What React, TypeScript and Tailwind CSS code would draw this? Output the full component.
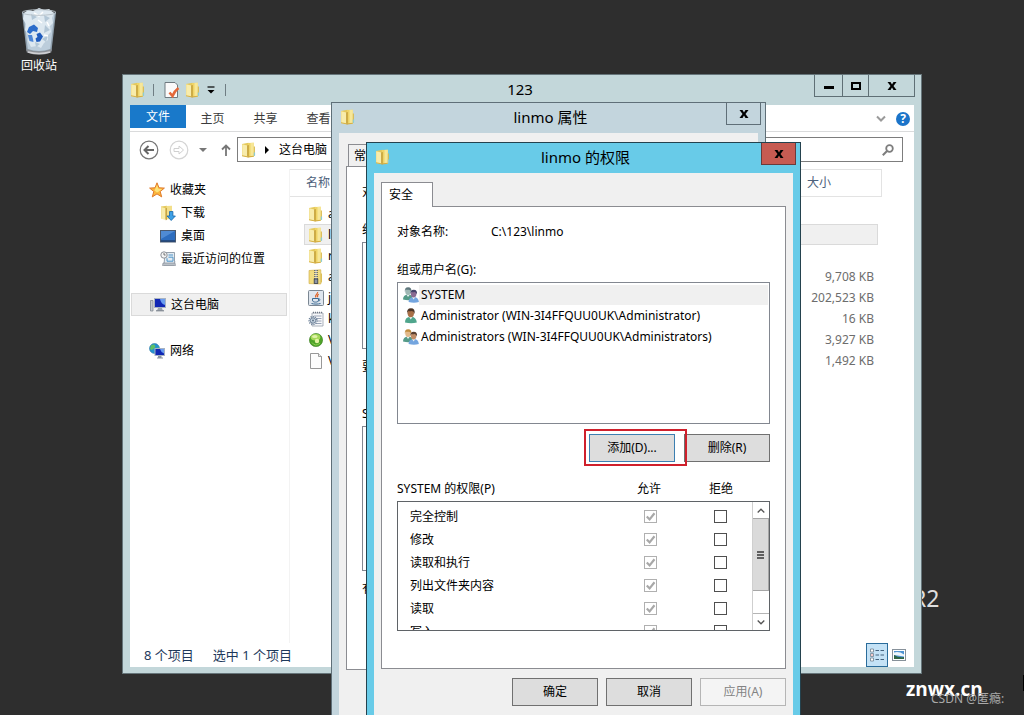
import type { ReactNode } from "react";

type IconProps = { className?: string };

function FolderIcon({ className = "size-4" }: IconProps) {
  return (
    <svg viewBox="0 0 16 16" className={`shrink-0 ${className}`} aria-hidden="true">
      <path d="M1 2 7.500.8v13.700L1 13.800z" fill="#e5c95c" />
      <path d="M7 1 12.800.8v13.700L7 15z" fill="#efd467" />
      <path d="M9.500 1 12.800.8v13.700l-3.300.2z" fill="#f7e798" />
      <path d="M1.200 2.200 6.200 3.400v11.800l-5-1.200z" fill="#f8ecab" />
      <path d="M6.200 3.400 7.800 3v12.500l-1.600-.3z" fill="#b8922f" opacity=".75" />
      <path d="M1 13.200 7.500 14.600v1L1 14.200z" fill="#d6b044" />
      <path d="M7.500 14.200 12.800 13.800v.9l-5.300.8z" fill="#d6b044" />
      <path d="M12.800 4.500h1.100v8.500l-1.100 1z" fill="#d9b94e" />
      <path d="M12.800 10.500h1.300v3l-1.300.8z" fill="#8ccbd4" />
    </svg>
  );
}

function ZipFolderIcon() {
  return (
    <svg viewBox="0 0 16 16" className="size-4 shrink-0" aria-hidden="true">
      <path d="M1 1.500 12.800.8v14.200L1 14.600z" fill="#f1dc80" stroke="#cfa93c" strokeWidth=".6" />
      <path d="M12.800 4.600h1.200v9h-1.200z" fill="#dcbf58" />
      <path d="M8 1v10" stroke="#3f485c" strokeWidth="3.400" strokeDasharray="1 1" />
      <path d="M8 1v10" stroke="#e8e8ee" strokeWidth="1" />
      <rect x="6.200" y="10" width="3.600" height="4.500" fill="#8d94a5" stroke="#353c4c" strokeWidth=".8" />
    </svg>
  );
}

function JavaIcon() {
  return (
    <svg viewBox="0 0 16 16" className="size-4 shrink-0" aria-hidden="true">
      <rect x=".5" y=".5" width="15" height="15" rx="1" fill="#dfe6ee" stroke="#7b8793" />
      <path d="M9.600 2c.6 2-3.400 2.600-1.700 5.500M10.800 4.300c-2 .8-1.500 1.900-1.100 3" fill="none" stroke="#e06226" strokeWidth="1.200" />
      <path d="M4.500 8.500h6v1.600c0 1.500-1.200 2-3 2s-3-.5-3-2zM10.500 9c2-.5 2 1.800 0 2M3.500 13.500c2.500.8 6.500.8 9 0" fill="none" stroke="#3c6a93" strokeWidth="1" />
    </svg>
  );
}

function ConfigIcon() {
  return (
    <svg viewBox="0 0 16 16" className="size-4 shrink-0" aria-hidden="true">
      <path d="M4 2h11v13H4z" fill="#f7f8fa" stroke="#97a0ab" strokeWidth=".8" />
      <path d="M5 1.500h10" stroke="#6f7885" strokeWidth="1.500" strokeDasharray="1 1" />
      <path d="M6 5h7.500M8 7.500h5.500M9 10h4.500M8 12.500h5.500" stroke="#8f9bb0" strokeWidth=".9" />
      <circle cx="5" cy="9.500" r="3.900" fill="none" stroke="#6e8299" strokeWidth="1.500" strokeDasharray="1.200 1" />
      <circle cx="5" cy="9.500" r="2.700" fill="#c9d6e3" stroke="#6e8299" strokeWidth="1" />
      <circle cx="5" cy="9.500" r=".9" fill="#55697f" />
    </svg>
  );
}

function GreenBallIcon() {
  return (
    <svg viewBox="0 0 16 16" className="size-4 shrink-0" aria-hidden="true">
      <circle cx="8" cy="8" r="6.600" fill="#4fa329" stroke="#3a7d20" strokeWidth=".6" />
      <ellipse cx="7.500" cy="5.300" rx="4.800" ry="3.300" fill="#a5d85a" />
      <ellipse cx="6.800" cy="4.500" rx="2.800" ry="1.600" fill="#dff2a8" />
      <circle cx="9" cy="9" r="2.200" fill="#e4f3a4" />
      <path d="M4 10.500q3 4.500 8 .8" fill="none" stroke="#8dd04e" strokeWidth="1" />
    </svg>
  );
}

function BlankFileIcon() {
  return (
    <svg viewBox="0 0 16 16" className="size-4 shrink-0" aria-hidden="true">
      <path d="M2.500.5h8l3 3v12h-11z" fill="#fdfdfd" stroke="#8c8c8c" strokeWidth=".9" />
      <path d="M10.500.5v3h3" fill="#ececec" stroke="#8c8c8c" strokeWidth=".8" />
    </svg>
  );
}

function StarIcon() {
  return (
    <svg viewBox="0 0 16 16" className="size-4 shrink-0" aria-hidden="true">
      <path
        d="m8 .8 2 5 5.400.3-4.200 3.400 1.500 5.400L8 11.900l-4.700 3 1.500-5.400L.6 6.100 6 5.800z"
        fill="#fbb73c"
        stroke="#e07a2c"
        strokeWidth="1"
        strokeLinejoin="round"
      />
      <path d="m8 3 1.400 3.700 3.800.3-3 2.300L8 10.500 5.500 8.500z" fill="#fde27a" />
    </svg>
  );
}

function DownloadsIcon() {
  return (
    <svg viewBox="0 0 16 16" className="size-4 shrink-0" aria-hidden="true">
      <path d="M1 1.500 7 .8v13.500l-6-.8z" fill="#e5c95c" />
      <path d="M6.500 1 12 .8v13l-5.500.7z" fill="#f3df8a" />
      <path d="M1.200 2 5.500 3.200V15l-4.300-1.300z" fill="#f8ecab" />
      <path d="M5.500 3.200 7 3v12l-1.500.2z" fill="#b8922f" opacity=".7" />
      <path d="M9.500 6.500h3.400V11h2.500l-4.200 4.500L7 11h2.500z" fill="#3da0e6" stroke="#1566a8" strokeWidth=".8" />
    </svg>
  );
}

function DesktopIcon() {
  return (
    <svg viewBox="0 0 16 16" className="size-4 shrink-0" aria-hidden="true">
      <rect x=".5" y="2.500" width="15" height="11.500" fill="#2d6dbf" stroke="#4a5a70" />
      <path d="M1 3h14L1 11z" fill="#4f8bd4" />
      <path d="M1 13h14" stroke="#20375c" strokeWidth="1.200" />
    </svg>
  );
}

function RecentIcon() {
  return (
    <svg viewBox="0 0 16 16" className="size-4 shrink-0" aria-hidden="true">
      <path d="M5 1.500h9.500v9H15l-1 3.500H4z" fill="#e3ebf2" stroke="#7e8b99" strokeWidth=".8" />
      <circle cx="4" cy="4" r="3.200" fill="#f4f4f4" stroke="#81868d" strokeWidth=".9" />
      <path d="M4 2v2h1.600" fill="none" stroke="#555" strokeWidth=".8" />
      <path d="M8.500 4H13M8.500 6.200H13v4H7v-3" fill="none" stroke="#4f95c9" strokeWidth="1" />
      <path d="M3 12h12l.5 2.500h-13z" fill="#b9c0c8" stroke="#7d858e" strokeWidth=".6" />
    </svg>
  );
}

function ComputerIcon() {
  return (
    <svg viewBox="0 0 16 16" className="size-4 shrink-0" aria-hidden="true">
      <path d="M.5 3.500h2.500v10.500H.5z" fill="#c6cbd1" stroke="#777f88" strokeWidth=".7" />
      <rect x="4.500" y="1.500" width="11" height="9" fill="#1027b4" stroke="#a7b2c2" />
      <path d="M10 2h5v6q-4-1-5-6" fill="#6a9df0" />
      <path d="M8 11h4l.8 2.500H7z" fill="#9aa4af" />
      <path d="M6 13.800h8" stroke="#6d7680" strokeWidth="1" />
    </svg>
  );
}

function NetworkIcon() {
  return (
    <svg viewBox="0 0 16 16" className="size-4 shrink-0" aria-hidden="true">
      <circle cx="5.500" cy="5.500" r="5" fill="#2692cf" stroke="#1b6c9c" strokeWidth=".5" />
      <path d="M2 2.500q3-2 4 0t-2 3.500Q2 8 1 5.500zM6.500 6l3-2 .8 3-3 3z" fill="#5fc064" />
      <rect x="6" y="5.500" width="9.500" height="7" fill="#1027b4" stroke="#a7b2c2" />
      <path d="M11 6h4v4.500q-3-1-4-4.500" fill="#6a9df0" />
      <path d="M9 13h3.500v1.500H14v1H8v-1h1z" fill="#8b95a1" />
    </svg>
  );
}

type PersonProps = { x: number; y: number; scale: number; hair: string; skin: string; shirt: string };

function PersonShape({ x, y, scale, hair, skin, shirt }: PersonProps) {
  return (
    <g transform={`translate(${x} ${y}) scale(${scale})`}>
      <path d="M0 10.500q0-4 4-4.200t4.600 4.200q-4 1.200-8.600 0" fill={shirt} />
      <path d="m2.800 6.200 1.400 2.200 1.500-2.200z" fill="#eef4f4" />
      <ellipse cx="4.200" cy="3.800" rx="2.300" ry="2.900" fill={skin} />
      <path d="M1.600 4.200Q1 .2 4.300.2t2.600 4.100Q6.300 2.300 5 2.200q-1.800.4-2.600-.1-.6.700-.8 2.100" fill={hair} />
    </g>
  );
}

function UserIcon() {
  return (
    <svg viewBox="0 0 16 16" className="size-4 shrink-0" aria-hidden="true">
      <PersonShape x={2} y={0} scale={1.38} hair="#4c3425" skin="#a86f47" shirt="#4fa58c" />
    </svg>
  );
}

function GroupIcon({ warm = false }: { warm?: boolean }) {
  return (
    <svg viewBox="0 0 16 16" className="size-4 shrink-0" aria-hidden="true">
      <PersonShape x={0} y={0} scale={1.2} hair={warm ? "#c08c3e" : "#5f777d"} skin={warm ? "#e2b98a" : "#9fb8b4"} shirt="#559b88" />
      <PersonShape x={5.6} y={2.4} scale={1.2} hair={warm ? "#5a4030" : "#46446b"} skin={warm ? "#c08d66" : "#8a6a92"} shirt="#74a5df" />
    </svg>
  );
}

function RecycleBinIcon() {
  return (
    <svg viewBox="0 0 40 48" className="h-12 w-10" aria-hidden="true">
      <path d="M3 4.500 7.500 43q12.500 5 25 0L37 4.500z" fill="#8f9fac" />
      <path d="M4.500 6 8.800 41q11.200 4 22.400 0L35.500 6z" fill="#bccddb" />
      <path d="m5 5 4-3 5 1 6-3 5 2 5-1 5 4-2 5 1 5-3 3 1 6-3 3 0 5-4 3-3 5-4-2-6 1-3-6 1-5-4-6 1-6-3-5z" fill="#dde8f0" />
      <path d="m25 7 6 3-5 4zM26 17l5 5-6 3zM23 31l6-4-2 7zM12 6l6 3-5 3zM16 34l5 2-4 3z" fill="#b2c6d6" />
      <path d="m15 5 5 3 4-4M28 14l2 4M25 27l4 1M19 12l4 3" fill="none" stroke="#fff" strokeWidth="1.500" />
      <path d="m10 19 5-2.500 4 3.500-1 4-4-1-3 3-3-2z" fill="#2b6cca" />
      <path d="m17.500 26 3.500-1.500 3 4-3 5-3.500.5-1-3.500 2-1.500z" fill="#1f5bbd" />
      <path d="m9 27 4 0 1 4 .5 3-4-1z" fill="#4d86d6" />
      <ellipse cx="20" cy="4.500" rx="17" ry="2.800" fill="none" stroke="#b9c3ca" strokeWidth="1" />
      <path d="M7.300 41q12.700 5 25.400 0l-.5 3.500q-12 4.500-24.400 0z" fill="#8c9096" />
      <path d="M9 44q11 3 22 0" fill="none" stroke="#cfd0d4" strokeWidth="1.600" />
    </svg>
  );
}

function PropertiesIcon() {
  return (
    <svg viewBox="0 0 16 16" className="size-4" aria-hidden="true">
      <path d="M1 .5h10l2.500 2.500v12.500H1z" fill="#fafafa" stroke="#6f7a80" />
      <path d="M5.500 10.500 8.500 14q2-5 6-8" fill="none" stroke="#e4683a" strokeWidth="2.600" />
    </svg>
  );
}

function CloseGlyph() {
  return (
    <svg viewBox="0 0 10 8" className="h-2 w-2.5" aria-hidden="true">
      <path d="M.5 0h3L5 2.500 6.500 0h3L6.500 4l3 4h-3L5 5.500 3.500 8h-3l3-4z" fill="#000" />
    </svg>
  );
}

function TitleBar({ title, closeClass }: { title: string; closeClass: string }) {
  return (
    <header className="grid h-[30px] grid-cols-[1fr_auto_1fr] items-center pr-1 pl-2">
      <FolderIcon className="mb-0.5 size-4" />
      <h2 className="pb-0.5 text-[15px] leading-5">{title}</h2>
      <div className="flex h-full justify-end">
        <button
          type="button"
          aria-label="关闭"
          className={`flex h-[22px] w-[35px] items-center justify-center self-start border-x border-b ${closeClass}`}
        >
          <CloseGlyph />
        </button>
      </div>
    </header>
  );
}

type DialogButtonProps = { children: ReactNode; className?: string; disabled?: boolean };

function DialogButton({ children, className = "border-[#707070] bg-[#dddddd]", disabled = false }: DialogButtonProps) {
  return (
    <button type="button" disabled={disabled} className={`h-7 w-[86px] border text-center leading-5 ${className}`}>
      {children}
    </button>
  );
}

function NavItem({ icon, label, className = "pl-[19px]" }: { icon: ReactNode; label: string; className?: string }) {
  return (
    <li>
      <a href="#" className={`flex h-[23px] items-center gap-[5px] ${className}`}>
        {icon}
        {label}
      </a>
    </li>
  );
}

const files = [
  { icon: <FolderIcon />, name: "a", size: "" },
  { icon: <FolderIcon />, name: "l", size: "", selected: true },
  { icon: <FolderIcon />, name: "r", size: "" },
  { icon: <ZipFolderIcon />, name: "a", size: "9,708 KB" },
  { icon: <JavaIcon />, name: "j", size: "202,523 KB" },
  { icon: <ConfigIcon />, name: "k", size: "16 KB" },
  { icon: <GreenBallIcon />, name: "V", size: "3,927 KB" },
  { icon: <BlankFileIcon />, name: "V", size: "1,492 KB" },
];

function FileTable() {
  return (
    <table className="w-[592px] table-fixed border-collapse self-start">
      <thead>
        <tr className="text-left text-[#4c607a]">
          <th scope="col" className="p-0 pb-1.5 font-normal">
            <div className="flex h-7 items-center border-y border-[#e3e3e3] pl-4">名称</div>
          </th>
          <th scope="col" className="w-[83px] p-0 pb-1.5 font-normal">
            <div className="flex h-7 items-center border border-l-0 border-[#e3e3e3] pl-2">大小</div>
          </th>
        </tr>
      </thead>
      <tbody>
        {files.map((file, i) => (
          <tr key={i}>
            <td className="p-0 pl-3.5">
              <div className={`flex h-[21px] items-center gap-1 border border-r-0 pl-[3px] ${file.selected ? "border-[#dadada] bg-[#f0f0f0]" : "border-transparent"}`}>
                {file.icon}
                {file.name}
              </div>
            </td>
            <td className="p-0 pr-1">
              <div className={`flex h-[21px] items-center justify-end border border-l-0 pr-[3px] text-[#6d6d6d] ${file.selected ? "border-[#dadada] bg-[#f0f0f0]" : "border-transparent"}`}>
                {file.size}
              </div>
            </td>
          </tr>
        ))}
      </tbody>
    </table>
  );
}

function ExplorerWindow() {
  return (
    <section className="absolute top-[74px] left-[122px] flex h-[600px] w-[800px] flex-col border border-[#66757a] bg-[#c3d7da] px-[7px] pb-1.5">
      <header className="flex h-[30px] shrink-0 items-center">
        <FolderIcon />
        <span className="mx-[7px] h-3 w-px bg-[#6f7d83]" />
        <button type="button" aria-label="属性" className="ml-[3px]">
          <PropertiesIcon />
        </button>
        <button type="button" aria-label="新建文件夹" className="ml-[5px]">
          <FolderIcon />
        </button>
        <button type="button" aria-label="自定义快速访问工具栏" className="ml-1.5">
          <svg viewBox="0 0 8 8" className="size-2" aria-hidden="true">
            <path d="M.5 1h7" stroke="#000" strokeWidth="1.200" />
            <path d="M.5 4h7L4 7.500z" fill="#000" />
          </svg>
        </button>
        <span className="ml-2.5 h-3 w-px bg-[#6f7d83]" />
        <h1 className="flex-1 pb-0.5 text-center text-[15px] leading-5">123</h1>
        <div className="-mr-px flex h-[22px] self-start border-x border-b border-[#5f6f75]">
          <button type="button" aria-label="最小化" className="flex w-7 items-center justify-center border-r border-[#5f6f75]">
            <span className="mt-1 h-[3px] w-2.5 bg-black" />
          </button>
          <button type="button" aria-label="最大化" className="flex w-[26px] items-center justify-center border-r border-[#5f6f75]">
            <span className="h-2 w-2.5 border-2 border-black" />
          </button>
          <button type="button" aria-label="关闭" className="flex w-[45px] items-center justify-center">
            <CloseGlyph />
          </button>
        </div>
      </header>

      <div className="flex min-h-0 flex-1 flex-col bg-white text-[12px] leading-5">
        <nav className="flex h-[27px] shrink-0 items-start border-b border-[#dadbdc] text-[#3b3b3b]">
          <a href="#" className="flex h-[23px] w-14 items-center justify-center bg-[#1979ca] text-white">文件</a>
          <a href="#" className="flex h-[27px] w-[53px] items-center justify-center">主页</a>
          <a href="#" className="flex h-[27px] w-[53px] items-center justify-center">共享</a>
          <a href="#" className="flex h-[27px] w-[53px] items-center justify-center">查看</a>
          <div className="ml-auto flex h-[27px] items-center gap-2.5 pr-1">
            <svg viewBox="0 0 10 8" className="h-2 w-2.5" aria-hidden="true">
              <path d="m1 1.500 4 4 4-4" fill="none" stroke="#9a9a9a" strokeWidth="2" />
            </svg>
            <button type="button" aria-label="帮助" className="flex size-3.5 items-center justify-center rounded-full bg-[#1b74c9] text-[12px] leading-none font-bold text-white">
              ?
            </button>
          </div>
        </nav>

        <div className="flex h-[37px] shrink-0 items-center pr-[11px] pb-0.5 pl-[9px]">
          <button type="button" aria-label="后退">
            <svg viewBox="0 0 20 20" className="size-5" aria-hidden="true">
              <circle cx="10" cy="10" r="8.800" fill="none" stroke="#767676" strokeWidth="1.200" />
              <path d="M15 10H6M9.500 6 5.500 10l4 4" fill="none" stroke="#666" strokeWidth="2" />
            </svg>
          </button>
          <button type="button" aria-label="前进" className="ml-2.5">
            <svg viewBox="0 0 20 20" className="size-5" aria-hidden="true">
              <circle cx="10" cy="10" r="8.800" fill="none" stroke="#d4d4d4" strokeWidth="1.200" />
              <path d="M5 8.500h5V6l4.500 4-4.500 4v-2.500H5z" fill="none" stroke="#d0d0d0" strokeWidth="1" />
            </svg>
          </button>
          <svg viewBox="0 0 8 4" className="ml-2.5 h-1 w-2" aria-hidden="true">
            <path d="M0 0h8L4 4z" fill="#777" />
          </svg>
          <button type="button" aria-label="上移" className="ml-3.5">
            <svg viewBox="0 0 10 12" className="h-3 w-2.5" aria-hidden="true">
              <path d="M5 12V2M1 5.500l4-4 4 4" fill="none" stroke="#777" strokeWidth="1.800" />
            </svg>
          </button>
          <div className="ml-1.5 flex h-[25px] flex-1 items-center border border-[#7d7d7d] pl-[3px]">
            <FolderIcon />
            <svg viewBox="0 0 4 8" className="mr-2.5 ml-2 h-2 w-1" aria-hidden="true">
              <path d="M0 0v8l4-4z" fill="#000" />
            </svg>
            这台电脑
          </div>
          <label className="ml-3 flex h-[25px] w-[200px] items-center border border-[#7d7d7d] pr-2">
            <input type="search" aria-label="搜索" className="h-full min-w-0 flex-1 bg-transparent outline-none" />
            <svg viewBox="0 0 12 12" className="size-3" aria-hidden="true">
              <circle cx="7.500" cy="4.500" r="3.300" fill="none" stroke="#7d7d7d" strokeWidth="1.800" />
              <path d="M5 7 .8 11.200" stroke="#7d7d7d" strokeWidth="2" />
            </svg>
          </label>
        </div>

        <div className="flex min-h-0 flex-1">
          <nav className="w-40 shrink-0 border-r border-[#f3f3f3] pt-[9px] pr-0.5">
            <ul>
              <NavItem icon={<StarIcon />} label="收藏夹" />
              <NavItem icon={<DownloadsIcon />} label="下载" className="pl-[30px]" />
              <NavItem icon={<DesktopIcon />} label="桌面" className="pl-[30px]" />
              <NavItem icon={<RecentIcon />} label="最近访问的位置" className="pl-[30px]" />
            </ul>
            <ul className="mt-[23px] pl-px">
              <NavItem icon={<ComputerIcon />} label="这台电脑" className="border border-[#dadada] bg-[#f0f0f0] pl-[18px]" />
            </ul>
            <ul className="mt-[23px]">
              <NavItem icon={<NetworkIcon />} label="网络" />
            </ul>
          </nav>
          <FileTable />
        </div>

        <footer className="flex h-6 shrink-0 items-center pr-2 pl-3.5 text-[13px] text-[#1e395b]">
          <span>8 个项目</span>
          <span className="ml-[19px]">选中 1 个项目</span>
          <button type="button" aria-label="详细信息" className="ml-auto flex h-6 w-[22px] items-center justify-center border border-[#2a6c9b] bg-[#c4e2f6]">
            <svg viewBox="0 0 16 14" className="h-3.5 w-4" aria-hidden="true">
              <path d="M1.500 1h3v3h-3zM1.500 5.500h3v3h-3zM1.500 10h3v3h-3z" fill="#fff" stroke="#71828f" strokeWidth=".8" />
              <path d="M6.500 2.500H10M11.500 2.500H15M6.500 7H10M11.500 7H15M6.500 11.500H10M11.500 11.500H15" stroke="#45637e" strokeWidth="1" />
              <path d="M2.500 7h1" stroke="#d42e35" />
            </svg>
          </button>
          <button type="button" aria-label="大图标" className="ml-1">
            <svg viewBox="0 0 14 12" className="h-3 w-3.5" aria-hidden="true">
              <rect x=".5" y=".5" width="13" height="11" fill="#fff" stroke="#87919a" />
              <path d="M2 2h10v8H2z" fill="#4f93d2" />
              <path d="M2 3.500q5-1.500 10 2v2L2 6z" fill="#eef6fc" />
              <path d="M2 6q5 3 10 2v2H2z" fill="#2f6545" />
            </svg>
          </button>
        </footer>
      </div>
    </section>
  );
}

function PropertiesWindow() {
  return (
    <section className="absolute top-[102px] left-[331px] w-[435px] border border-[#5f6f78] bg-[#c3d5dd] px-[7px] pb-[7px] text-[12px] leading-5">
      <div className="-mx-[7px]">
        <TitleBar title="linmo 属性" closeClass="border-[#5f6f78]" />
      </div>
      <div className="bg-[#f0f0f0] px-[7px] pt-[11px] pb-12">
        <button type="button" className="ml-0.5 block h-[22px] border border-b-0 border-[#8b8c91] px-[5px]">
          常
        </button>
        <div className="border border-[#8b8c91] bg-white px-[15px] pt-[15px] pb-[70px]">
          <p>对</p>
          <p className="mt-[18px]">组</p>
          <div className="mt-0.5 h-[107px] border border-[#828790]" />
          <p className="mt-2">要</p>
          <p className="mt-[27px]">S</p>
          <div className="mt-0.5 h-[145px] border border-[#828790]" />
          <p className="mt-2">有</p>
        </div>
      </div>
    </section>
  );
}

const principals = [
  { icon: <GroupIcon />, name: "SYSTEM", selected: true },
  { icon: <UserIcon />, name: "Administrator (WIN-3I4FFQUU0UK\\Administrator)" },
  { icon: <GroupIcon warm />, name: "Administrators (WIN-3I4FFQUU0UK\\Administrators)" },
];

const permissions = ["完全控制", "修改", "读取和执行", "列出文件夹内容", "读取", "写入"];

function PermissionCheck({ label, granted = false }: { label: string; granted?: boolean }) {
  return (
    <span className="grid size-[13px]">
      <input
        type="checkbox"
        aria-label={label}
        defaultChecked={granted}
        disabled={granted}
        className="size-[13px] appearance-none border border-[#4f4f4f] bg-white [grid-area:1/1] disabled:border-[#b0b0b0]"
      />
      {granted && (
        <svg viewBox="0 0 13 13" className="pointer-events-none size-[13px] [grid-area:1/1]" aria-hidden="true">
          <path d="m2.800 6.500 2.800 2.900L10.500 3.300" fill="none" stroke="#a8a8a8" strokeWidth="2.200" />
        </svg>
      )}
    </span>
  );
}

function ScrollBar() {
  return (
    <div className="flex w-[17px] shrink-0 flex-col border-l border-[#cfcfcf]">
      <button type="button" aria-label="向上滚动" className="flex h-4 items-center justify-center">
        <svg viewBox="0 0 8 5" className="h-[5px] w-2" aria-hidden="true">
          <path d="m.7 4.500 3.300-3.300 3.300 3.300" fill="none" stroke="#555" strokeWidth="1.300" />
        </svg>
      </button>
      <div className="flex h-[73px] flex-col items-center justify-center gap-px border border-l-0 border-[#a6a6a6] bg-[#dadada]">
        <span className="h-0.5 w-[7px] bg-[#606060]" />
        <span className="h-0.5 w-[7px] bg-[#606060]" />
        <span className="h-0.5 w-[7px] bg-[#606060]" />
      </div>
      <button type="button" aria-label="向下滚动" className="mt-auto flex h-[17px] items-center justify-center border-t border-[#b5b5b5]">
        <svg viewBox="0 0 8 5" className="h-[5px] w-2" aria-hidden="true">
          <path d="M.7.500 4 3.800 7.300.500" fill="none" stroke="#555" strokeWidth="1.300" />
        </svg>
      </button>
    </div>
  );
}

function PermissionsWindow() {
  return (
    <section className="absolute top-[142px] left-[366px] w-[435px] border border-[#24424e] bg-[#68cbe8] px-[7px] pb-[7px] text-[12px] leading-5">
      <div className="-mx-[7px]">
        <TitleBar title="linmo 的权限" closeClass="border-[#6b3b3b] bg-[#c75b52]" />
      </div>
      <div className="bg-[#f0f0f0] px-[7px] pt-[9px] pb-3">
        <button type="button" className="relative -mb-px block h-[25px] w-[52px] border border-b-0 border-[#8b8c91] bg-white pr-3">
          安全
        </button>
        <div className="border border-[#8b8c91] bg-white px-[15px] pt-[15px] pb-[37px]">
          <div className="flex">
            <span className="w-[94px]">对象名称:</span>
            <span>C:\123\linmo</span>
          </div>

          <p className="mt-[18px]">组或用户名(G):</p>
          <ul className="mt-0.5 h-[142px] border border-[#828790] py-px pr-px pl-[5px]">
            {principals.map((p) => (
              <li key={p.name} className="flex h-[21px] items-center">
                {p.icon}
                <span className={`flex-1 pl-0.5 ${p.selected ? "bg-[#f0f0f0]" : ""}`}>{p.name}</span>
              </li>
            ))}
          </ul>

          <div className="mt-[10px] flex justify-end gap-[9px]">
            <div className="relative">
              <DialogButton className="border-[#3c7fb1] bg-[#dddddd]">添加(D)...</DialogButton>
              <span className="pointer-events-none absolute -top-[5px] -left-[5px] z-10 h-[37px] w-[103px] border-2 border-[#cf202c]" />
            </div>
            <DialogButton>删除(R)</DialogButton>
          </div>

          <div className="mt-[17px] flex">
            <span className="flex-1">SYSTEM 的权限(P)</span>
            <span className="w-[72px] text-center">允许</span>
            <span className="mr-[13px] w-[72px] text-center">拒绝</span>
          </div>
          <div className="mt-0.5 flex h-[130px] overflow-hidden border border-[#5f6367]">
            <div className="flex-1 overflow-hidden pt-[3px] pl-3">
              <table className="w-full table-fixed border-collapse">
                <tbody>
                  {permissions.map((name) => (
                    <tr key={name} className="h-[23px]">
                      <th scope="row" className="p-0 text-left font-normal">{name}</th>
                      <td className="w-[70px] p-0">
                        <PermissionCheck label={`允许 ${name}`} granted />
                      </td>
                      <td className="w-[38px] p-0">
                        <PermissionCheck label={`拒绝 ${name}`} />
                      </td>
                    </tr>
                  ))}
                </tbody>
              </table>
            </div>
            <ScrollBar />
          </div>
        </div>
        <div className="mt-[9px] flex justify-end gap-2">
          <DialogButton>确定</DialogButton>
          <DialogButton>取消</DialogButton>
          <DialogButton disabled className="border-[#b5b5b5] bg-[#f4f4f4] text-[#838383]">应用(A)</DialogButton>
        </div>
      </div>
    </section>
  );
}

export default function App() {
  return (
    <main className="relative h-screen overflow-hidden bg-[#2e2e2e] font-['Noto_Sans','Noto_Sans_CJK_SC',sans-serif] text-[12px] text-black">
      <a href="#" className="absolute top-2 left-3 flex w-[54px] flex-col items-center leading-5 text-white">
        <RecycleBinIcon />
        回收站
      </a>
      <p className="absolute top-[582px] left-[912px] text-[23px] leading-8 text-[#dedede]">R2</p>

      <ExplorerWindow />
      <PropertiesWindow />
      <PermissionsWindow />

      <p className="absolute top-[677px] left-[906px] font-['Open_Sans',sans-serif] text-[19px] leading-6 font-bold text-white">znwx.cn</p>
      <p className="absolute top-[689px] left-[931px] text-[12px] leading-5 text-[#a9a9a9]">CSDN @匿瘾:</p>
      <span className="absolute top-[675px] right-0 h-4 w-px bg-black" />
    </main>
  );
}
